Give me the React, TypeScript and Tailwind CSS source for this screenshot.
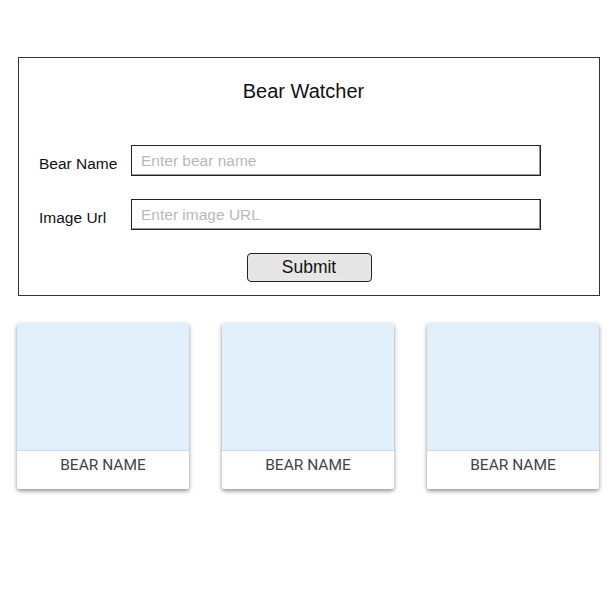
import React from 'react';

const cards = ['BEAR NAME', 'BEAR NAME', 'BEAR NAME'];

const FormRow: React.FC<{ label: string; placeholder: string }> = ({ label, placeholder }) => (
  <div className="flex items-center">
    <label className="w-[112px] pl-[20px] pt-[6px] text-[15.5px] text-[#111]">{label}</label>
    <input
      className="h-[31px] w-[410px] border border-[#222] bg-white pl-[9px] text-[15.5px] outline-none placeholder:text-[#b8b8b8] shadow-[inset_-1px_-1px_0_#999]"
      placeholder={placeholder}
    />
  </div>
);

export default function App() {
  return (
    <div className="bg-white min-h-[590px] pt-[57px]" style={{ fontFamily: '"Liberation Sans", Arial, sans-serif' }}>
      <div className="ml-[18px] flex h-[239px] w-[582px] flex-col border border-[#333]">
        <h1 className="pt-[22px] pr-[11px] text-center text-[20px] leading-[23px] text-[#111]">Bear Watcher</h1>
        <div className="mt-[42px] flex flex-col gap-[23px]">
          <FormRow label="Bear Name" placeholder="Enter bear name" />
          <FormRow label="Image Url" placeholder="Enter image URL" />
        </div>
        <div className="mt-[23px] flex justify-center">
          <button className="h-[29px] w-[125px] rounded-[4px] border border-[#222] bg-[#e6e6e6] text-[17.5px] text-[#111]">
            Submit
          </button>
        </div>
      </div>

      <div className="mt-[27px] flex gap-[33px] pl-[17px]">
        {cards.map((name, i) => (
          <div
            key={i}
            className="w-[172px] overflow-hidden rounded-[2px] bg-white shadow-[0_2px_4px_rgba(0,0,0,0.45)]"
          >
            <div className="h-[128px] border-b border-[#cadcec] bg-[#e1effb]" />
            <div
              className="h-[38px] pt-[3px] text-center text-[15.5px] text-[#444]"
              style={{ fontFamily: 'Roboto, "Liberation Sans", sans-serif' }}
            >
              {name}
            </div>
          </div>
        ))}
      </div>
    </div>
  );
}
